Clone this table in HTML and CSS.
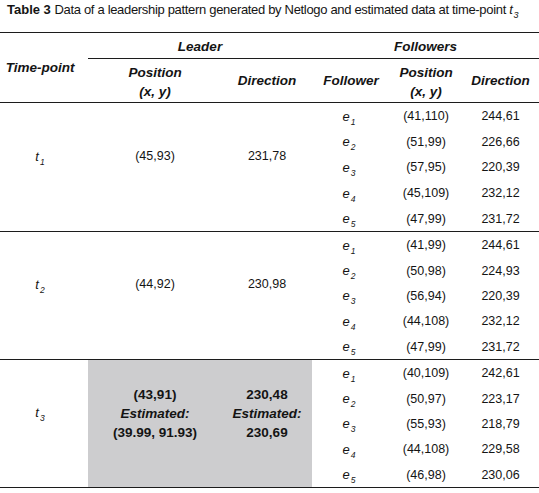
FILE: index.html
```html
<!DOCTYPE html>
<html>
<head>
<meta charset="utf-8">
<link rel="stylesheet" href="styles.css">
</head>
<body>
<div class="title"><b>Table 3</b> <span class="cap">Data of a leadership pattern generated by Netlogo and estimated data at time-point <i>t</i><sub class="ts">3</sub></span></div>
<div class="tbl">
  <div class="head">
    <div class="h tp">Time-point</div>
    <div class="h grp leader">Leader</div>
    <div class="h grp followers">Followers</div>
    <div class="h c2">Position<br>(x, y)</div>
    <div class="h c3">Direction</div>
    <div class="h c4">Follower</div>
    <div class="h c5">Position<br>(x, y)</div>
    <div class="h c6">Direction</div>
  </div>

  <div class="group g1">
    <div class="m c1"><span><i>t</i><sub>1</sub></span></div>
    <div class="m c2">(45,93)</div>
    <div class="m c3">231,78</div>
    <div class="d c4"><span><i>e</i><sub>1</sub></span></div><div class="d c5">(41,110)</div><div class="d c6">244,61</div>
    <div class="d c4"><span><i>e</i><sub>2</sub></span></div><div class="d c5">(51,99)</div><div class="d c6">226,66</div>
    <div class="d c4"><span><i>e</i><sub>3</sub></span></div><div class="d c5">(57,95)</div><div class="d c6">220,39</div>
    <div class="d c4"><span><i>e</i><sub>4</sub></span></div><div class="d c5">(45,109)</div><div class="d c6">232,12</div>
    <div class="d c4"><span><i>e</i><sub>5</sub></span></div><div class="d c5">(47,99)</div><div class="d c6">231,72</div>
  </div>

  <div class="group g2">
    <div class="m c1"><span><i>t</i><sub>2</sub></span></div>
    <div class="m c2">(44,92)</div>
    <div class="m c3">230,98</div>
    <div class="d c4"><span><i>e</i><sub>1</sub></span></div><div class="d c5">(41,99)</div><div class="d c6">244,61</div>
    <div class="d c4"><span><i>e</i><sub>2</sub></span></div><div class="d c5">(50,98)</div><div class="d c6">224,93</div>
    <div class="d c4"><span><i>e</i><sub>3</sub></span></div><div class="d c5">(56,94)</div><div class="d c6">220,39</div>
    <div class="d c4"><span><i>e</i><sub>4</sub></span></div><div class="d c5">(44,108)</div><div class="d c6">232,12</div>
    <div class="d c4"><span><i>e</i><sub>5</sub></span></div><div class="d c5">(47,99)</div><div class="d c6">231,72</div>
  </div>

  <div class="group g3">
    <div class="m c1"><span><i>t</i><sub>3</sub></span></div>
    <div class="m c2 est"><span>(43,91)<br><i>Estimated:</i><br>(39.99, 91.93)</span></div>
    <div class="m c3 est"><span>230,48<br><i>Estimated:</i><br>230,69</span></div>
    <div class="d c4"><span><i>e</i><sub>1</sub></span></div><div class="d c5">(40,109)</div><div class="d c6">242,61</div>
    <div class="d c4"><span><i>e</i><sub>2</sub></span></div><div class="d c5">(50,97)</div><div class="d c6">223,17</div>
    <div class="d c4"><span><i>e</i><sub>3</sub></span></div><div class="d c5">(55,93)</div><div class="d c6">218,79</div>
    <div class="d c4"><span><i>e</i><sub>4</sub></span></div><div class="d c5">(44,108)</div><div class="d c6">229,58</div>
    <div class="d c4"><span><i>e</i><sub>5</sub></span></div><div class="d c5">(46,98)</div><div class="d c6">230,06</div>
  </div>
</div>
</body>
</html>
```
FILE: styles.css
```css
html, body {
  margin: 0;
  padding: 0;
  background: #fff;
}
body {
  width: 539px;
  font-family: "Liberation Sans", Arial, sans-serif;
  color: #141414;
}
.title {
  height: 32px;
  box-sizing: border-box;
  padding: 2px 0 0 7px;
  font-size: 13px;
  line-height: 16px;
  white-space: nowrap;
}
.title .cap {
  letter-spacing: -0.32px;
}
.title sub.ts {
  font-size: 9px;
  font-style: italic;
  vertical-align: -4px;
  line-height: 0;
  margin-left: 1px;
}
.tbl {
  border-top: 1px solid #1c1c1c;
}
.head,
.group {
  display: grid;
  grid-template-columns: 88px 134px 90px 78px 72px 77px;
  border-bottom: 1px solid #1c1c1c;
}
.head {
  grid-template-rows: 26px 43px;
}
.h {
  font-weight: bold;
  font-style: italic;
  font-size: 13.5px;
  line-height: 19px;
  display: flex;
  align-items: center;
  justify-content: center;
  text-align: center;
}
.h.tp {
  grid-column: 1;
  grid-row: 1 / 3;
  padding-right: 8px;
}
.h.grp {
  grid-row: 1;
  border-bottom: 1px solid #1c1c1c;
  box-sizing: border-box;
  padding-top: 1px;
}
.h.leader { grid-column: 2 / 4; }
.h.followers { grid-column: 4 / 7; }
.head .c2 { grid-column: 2; grid-row: 2; padding-top: 2px; }
.head .c3 { grid-column: 3; grid-row: 2; }
.head .c4 { grid-column: 4; grid-row: 2; }
.head .c5 { grid-column: 5; grid-row: 2; padding-top: 2px; }
.head .c6 { grid-column: 6; grid-row: 2; }

.group {
  grid-template-rows: repeat(5, 1fr);
}
.g1 { height: 128px; }
.g2 { height: 127px; }
.g3 { height: 127px; }

.m {
  grid-row: 1 / 6;
  display: flex;
  align-items: center;
  justify-content: center;
  padding-bottom: 22px;
  font-size: 12.5px;
  text-align: center;
}
.m.c1 { grid-column: 1; padding-right: 8px; }
.m.c2 { grid-column: 2; }
.m.c3 { grid-column: 3; }
.m.est {
  background: #cdcdcf;
  font-weight: bold;
  font-size: 13.5px;
  line-height: 19px;
  padding-bottom: 20px;
}
.m.c1 i { font-size: 13px; }

.d {
  display: flex;
  align-items: center;
  justify-content: center;
  font-size: 12.5px;
  padding-top: 1px;
}
.d.c4 { grid-column: 4; padding-right: 4px; }
.d.c5 { grid-column: 5; }
.d.c6 { grid-column: 6; }
.d i { font-size: 13px; }

.d sub,
.m sub {
  font-size: 8.5px;
  font-style: italic;
  vertical-align: -4px;
  line-height: 0;
  margin-left: 1px;
}
```
